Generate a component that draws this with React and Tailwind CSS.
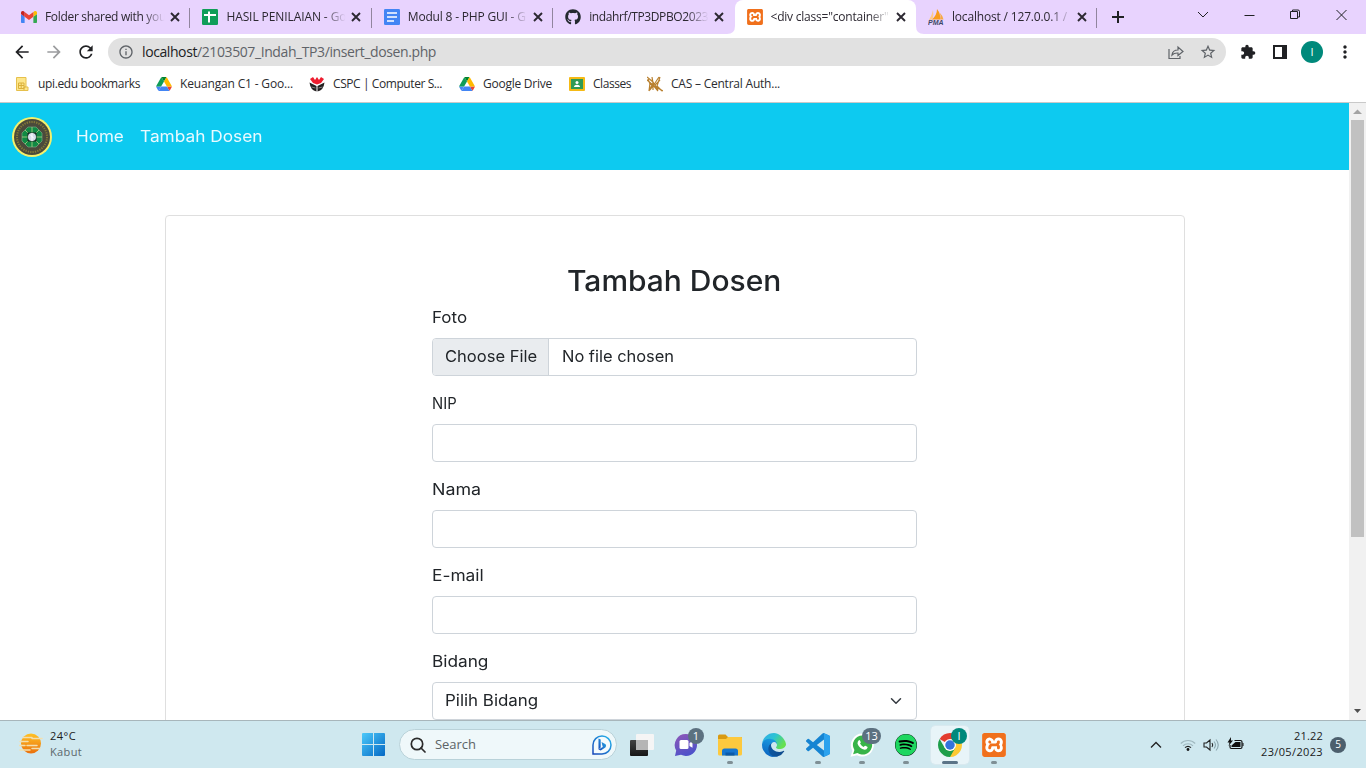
import React, { useLayoutEffect, useRef } from "react";
import {
  MdArrowBack, MdArrowForward, MdRefresh, MdInfoOutline, MdStarBorder, MdExtension,
  MdMoreVert,
} from "react-icons/md";
import { FaGithub, FaSpotify } from "react-icons/fa";
import { SiXampp } from "react-icons/si";

// A single line of text whose letter spacing is adjusted to fill the given width.
function Fit({ w, className = "", children }) {
  const ref = useRef(null);
  useLayoutEffect(() => {
    const el = ref.current;
    const adjust = () => {
      el.style.letterSpacing = "0px";
      const natural = el.getBoundingClientRect().width;
      el.style.letterSpacing = (w - natural) / el.textContent.length + "px";
    };
    adjust();
    document.fonts?.ready.then(adjust);
  }, [w]);
  return <span ref={ref} className={"inline-block shrink-0 whitespace-pre " + className}>{children}</span>;
}

// A single line of text whose glyphs are widened to fill the given width.
function Wide({ w, className = "", children }) {
  const ref = useRef(null);
  useLayoutEffect(() => {
    const el = ref.current;
    const adjust = () => { el.style.transform = `scaleX(${w / el.offsetWidth})`; };
    adjust();
    document.fonts?.ready.then(adjust);
  }, [w]);
  return (
    <span className={"inline-block shrink-0 whitespace-pre " + className} style={{ width: w }}>
      <span ref={ref} className="inline-block origin-left">{children}</span>
    </span>
  );
}

const Gmail = () => (
  <svg viewBox="52 42 88 66" className="h-3 w-4">
    <path fill="#4285f4" d="M58 108h14V74L52 59v43c0 3.32 2.69 6 6 6" />
    <path fill="#34a853" d="M120 108h14c3.32 0 6-2.69 6-6V59l-20 15" />
    <path fill="#fbbc04" d="M120 48v26l20-15v-8c0-7.42-8.47-11.65-14.4-7.2" />
    <path fill="#ea4335" d="M72 74V48l24 18 24-18v26L96 92" />
    <path fill="#c5221f" d="M52 51v8l20 15V48l-5.6-4.2c-5.94-4.45-14.4-.22-14.4 7.2" />
  </svg>
);
const Sheets = () => (
  <svg viewBox="0 0 16 16" className="size-4">
    <rect width="16" height="16" rx="1.3" fill="#0f9d58" />
    <path d="M2 6h12M7 2.5v11" stroke="#fff" strokeWidth="2" />
  </svg>
);
const Docs = () => (
  <svg viewBox="0 0 16 16" className="size-4">
    <rect width="16" height="16" rx="1.3" fill="#4285f4" />
    <path d="M3 4h10M3 8h10M3 12h7" stroke="#fff" strokeWidth="1.7" />
  </svg>
);
const Pma = () => (
  <svg viewBox="0 0 16 16" className="size-4">
    <path d="M5 1Q6 6 4.500 10.500L1 11Q4 6 5 1z" fill="#fdc98b" />
    <path d="M9 0Q13 5 12 10.500H4Q9 6 9 0z" fill="#f89c1c" />
    <path d="M12 4Q15 7 15.500 10.500H12Q13 7 12 4z" fill="#f7a944" />
    <text x="0" y="15.800" fontFamily="Liberation Sans" fontSize="6.500" fontWeight="700" fontStyle="italic" fill="#3d4666" textLength="15.500" lengthAdjust="spacingAndGlyphs">PMA</text>
  </svg>
);
const Drive = () => (
  <svg viewBox="0 0 87.3 78" className="h-3.5 w-4">
    <path fill="#4285f4" d="m6.600 66.850 3.850 6.650c.8 1.400 1.950 2.500 3.300 3.300l13.750-23.800h-27.500c0 1.550.4 3.100 1.200 4.500z" />
    <path fill="#0f9d58" d="m43.650 25-13.750-23.800c-1.350.8-2.500 1.900-3.300 3.300l-25.400 44a9.060 9.060 0 0 0 -1.200 4.500h27.500z" />
    <path fill="#ea4335" d="m73.550 76.800c1.350-.8 2.500-1.900 3.300-3.300l1.600-2.750 7.650-13.250c.8-1.400 1.200-2.950 1.200-4.500h-27.500l5.850 11.500z" />
    <path fill="#00832d" d="m43.650 25 13.750-23.800c-1.350-.8-2.900-1.200-4.500-1.200h-18.500c-1.600 0-3.150.45-4.500 1.200z" />
    <path fill="#4285f4" d="m59.800 53h-32.300l-13.750 23.800c1.350.8 2.900 1.200 4.500 1.200h50.800c1.600 0 3.150-.45 4.500-1.200z" />
    <path fill="#ffba00" d="m73.400 26.500-12.700-22c-.8-1.400-1.950-2.500-3.300-3.300l-13.750 23.800 16.150 28h27.450c0-1.550-.4-3.100-1.200-4.500z" />
  </svg>
);
const Building = () => (
  <svg viewBox="0 0 13 14" className="h-3.5 w-[13px]">
    <path d="M.5.5h9.500v9.500h2v3.500H.5z" fill="#fde68a" stroke="#e6c04c" />
    <path d="M2.500 6h5.500v5.500h-5.500zM2.500 8.500h5.500M5.200 6v5.500M8 13v-3h2" fill="none" stroke="#dbb03a" />
  </svg>
);
const Cspc = () => (
  <svg viewBox="0 0 16 16" className="size-4">
    <path d="M1 3l3-2 2 3 2-3 2 3 2-3 3 2-3 4-4 1.500-4-1.500z" fill="#ed1c2e" />
    <path d="M.5 6.500l7 3.500v5.500Q1.500 14.500.5 6.500zM15.500 6.500l-7 3.500v5.500q6-1 7-9z" fill="#231f20" />
    <path d="M2.500 11l4 1M13.500 11l-4 1" stroke="#aaa" strokeWidth=".7" />
  </svg>
);
const Classroom = () => (
  <svg viewBox="0 0 16 14" className="h-3.5 w-4">
    <rect width="16" height="14" rx="1" fill="#f5ba15" />
    <rect x="2" y="2" width="12" height="10" fill="#2f9a56" />
    <circle cx="8" cy="5.500" r="1.500" fill="#fff" />
    <path d="M4.800 10q.5-2.300 3.200-2.300T11.200 10z" fill="#fff" />
  </svg>
);
const Cas = () => (
  <svg viewBox="0 0 16 16" className="size-4" fill="none" stroke="#b9802f" strokeWidth="1.200">
    <path d="M0 1l6 5 3 5 7 4M1 3l2 5 4 2M3 7l-1 8M5 1l1 6-4 8M12 1L8 7l-5 7M13 4l-5 5 3 5M0 4l6 5 5 6M4 4l4 5M6 6v8M13 1l-3 9 5 5" />
  </svg>
);
const Xampp = ({ className }) => (
  <span className={"flex items-center justify-center rounded-[3px] bg-white text-[#f0701c] " + className}>
    <SiXampp className="size-full" />
  </span>
);

const Windows = () => (
  <svg viewBox="0 0 23 23" className="size-[23px]">
    <defs><linearGradient id="win" x1="0" y1="0" x2="1" y2="1"><stop stopColor="#4cc9fa" /><stop offset="1" stopColor="#0468c4" /></linearGradient></defs>
    <path fill="url(#win)" d="M1 0h10v11H0V1q0-1 1-1zM12 0h10q1 0 1 1v10H12zM0 12h11v11H1q-1 0-1-1zM12 12h11v10q0 1-1 1H12z" />
  </svg>
);
const Bing = () => (
  <svg viewBox="0 0 22 22" className="size-[22px]">
    <defs>
      <linearGradient id="bingr" x1="0" y1="1" x2="1" y2="0"><stop stopColor="#1746b8" /><stop offset="1" stopColor="#28b8ee" /></linearGradient>
    </defs>
    <path d="M2 20V11a9 9 0 1 1 9 9z" fill="#f4fbfd" stroke="url(#bingr)" strokeWidth="1.500" />
    <path d="M7.500 4.500l2.200 1v8l-2.200 2zM10.500 8l3.700 1.900q1.300.8.8 2.300-.4 1.300-1.800 2.100L9.700 16.500l-2.200-1 4.300-2.400z" fill="url(#bingr)" />
  </svg>
);
const TaskView = () => (
  <svg viewBox="0 0 24 22" className="h-[22px] w-6">
    <defs><linearGradient id="tv" x1="0" y1="0" x2="0" y2="1"><stop stopColor="#424242" /><stop offset="1" stopColor="#161616" /></linearGradient></defs>
    <rect x="0" y="6" width="18" height="16" rx="1" fill="url(#tv)" />
    <rect x="6" y="0" width="18" height="16" rx="1" fill="#f5f5f5" />
    <path d="M6 6h12v10H6z" fill="#b5b5b5" />
  </svg>
);
const Chat = () => (
  <svg viewBox="0 0 24 24" className="size-6">
    <defs><linearGradient id="chat" x1="0" y1="0" x2=".4" y2="1"><stop stopColor="#9058b7" /><stop offset="1" stopColor="#4f52c9" /></linearGradient></defs>
    <path d="M12 1a11 11 0 1 1-5 20.800L1 23l1.200-5.500A11 11 0 0 1 12 1z" fill="url(#chat)" />
    <rect x="5.500" y="7" width="9" height="9" rx="1.500" fill="#fff" />
    <path d="M15.500 10l3-1.700v6.500l-3-1.700z" fill="#fff" />
  </svg>
);
const Folder = () => (
  <svg viewBox="0 0 24 22" className="h-[22px] w-6">
    <path d="M0 2Q0 .5 1.500.5h6L10 3H23q1 0 1 1v4H0z" fill="#d99a12" />
    <path d="M0 5h8l2-2h13q1 0 1 1v16q0 1.500-1.500 1.500h-21Q0 21.500 0 20z" fill="#fdc93e" />
    <path d="M4 21.500V17q0-2.500 2.500-2.500h11Q20 14.500 20 17v4.500z" fill="#1676cf" />
    <path d="M7.500 18.500h9v3h-9z" fill="#0b5aa9" />
  </svg>
);
const Edge = () => (
  <svg viewBox="4.600 4.900 256 256" className="size-6">
    <defs>
      <linearGradient id="edA" x1="0" y1="0" x2="1" y2="0"><stop stopColor="#0c59a4" /><stop offset="1" stopColor="#114a8b" /></linearGradient>
      <linearGradient id="edB" x1=".6" y1="0" x2=".3" y2="1"><stop stopColor="#1b9de2" /><stop offset="1" stopColor="#0a62c0" /></linearGradient>
      <linearGradient id="edC" x1="0" y1="0" x2="1" y2=".5"><stop stopColor="#35a9e8" /><stop offset=".5" stopColor="#2cc3d5" /><stop offset="1" stopColor="#66e04f" /></linearGradient>
    </defs>
    <path fill="url(#edA)" d="M235.680 195.460a93.730 93.730 0 0 1-10.540 4.710 101.870 101.870 0 0 1-35.900 6.460c-47.320 0-88.540-32.550-88.540-74.320A31.480 31.480 0 0 1 117.130 105c-42.800 1.800-53.800 46.400-53.800 72.530 0 73.880 68.090 81.370 82.760 81.370 7.910 0 19.840-2.300 27-4.560l1.310-.44A128.340 128.340 0 0 0 241 201.100a4 4 0 0 0-5.320-5.640z" />
    <path fill="url(#edB)" d="M110.340 246.340A79.200 79.200 0 0 1 87.600 225 80.720 80.720 0 0 1 117.130 105c3.120-1.470 8.450-4.130 15.540-4a32.350 32.350 0 0 1 25.690 13 31.880 31.880 0 0 1 6.360 18.660c0-.21 24.460-79.600-80-79.600-43.900 0-80 41.660-80 78.210a130.150 130.150 0 0 0 12.110 56 128 128 0 0 0 156.380 67.110 75.550 75.550 0 0 1-62.780-8z" />
    <path fill="url(#edC)" d="M156.940 153.780c-.81 1.050-3.300 2.500-3.300 5.660 0 2.610 1.700 5.120 4.720 7.230 14.380 10 41.490 8.680 41.560 8.680a59.560 59.560 0 0 0 30.270-8.350A61.380 61.380 0 0 0 260.620 133c.26-22.410-8-37.310-11.340-43.910C228.090 47.760 182.680 4.920 132.620 4.920a128 128 0 0 0-128 126.200c.48-36.540 36.800-66.050 80-66.050 3.500 0 23.460.34 42 10.070 16.340 8.580 24.900 18.940 30.850 29.210 6.180 10.670 7.280 24.150 7.280 29.520S162 147.100 156.940 153.780z" />
  </svg>
);
const Code = () => (
  <svg viewBox="0 0 24 24" className="size-6">
    <path fill="#1684d2" d="M23.150 2.587L18.210.21a1.494 1.494 0 0 0-1.705.29l-9.460 8.630-4.120-3.128a.999.999 0 0 0-1.276.057L.327 7.261A1 1 0 0 0 .326 8.740L3.899 12 .326 15.260a1 1 0 0 0 .001 1.479L1.650 17.940a.999.999 0 0 0 1.276.057l4.120-3.128 9.460 8.630a1.492 1.492 0 0 0 1.704.29l4.942-2.377A1.500 1.500 0 0 0 24 20.060V3.939a1.500 1.500 0 0 0-.85-1.352zm-5.146 14.861L10.826 12l7.178-5.448v10.896z" />
    <path fill="#2ba2ee" d="M18.004.2l5.146 2.387Q24 3 24 3.939V20.060q0 .9-.85 1.350L18.004 23.800z" />
  </svg>
);
const Chrome = () => (
  <svg viewBox="0 0 48 48" className="size-6">
    <path d="M24 24L3.220 12A24 24 0 0 1 44.780 12z" fill="#e33b2e" />
    <path d="M24 24L44.780 12A24 24 0 0 1 24 48L13.600 30z" fill="#fcc934" />
    <path d="M3.220 12L13.600 30 24 36 34.400 30 24 48A24 24 0 0 1 3.220 12z" fill="#1e9e4a" />
    <path d="M24 12h20.800L34.400 30z" fill="#fcc934" />
    <circle cx="24" cy="24" r="12" fill="#fff" />
    <circle cx="24" cy="24" r="9.500" fill="#3273dc" />
  </svg>
);
const Whatsapp = () => (
  <svg viewBox="0 0 24 24" className="size-6">
    <path d="M12.500.5A11.500 11.500 0 1 1 7 22.200L.5 23.700l1.900-6A11.500 11.500 0 0 1 12.500.5z" fill="#fff" />
    <path d="M12.500 2.500a9.500 9.500 0 1 1-5 17.500l-4.400 1.200 1.300-4.200A9.500 9.500 0 0 1 12.500 2.500z" fill="#38b449" />
    <path d="M8.800 7.200q.8-.6 1.200.2l.8 1.800q.1.400-.8 1.400 1.400 2.500 3.800 3.400 1-1.400 1.500-1.200l2 1q.5.300.2 1-.8 2-2.800 1.900-5.300-1-7.200-6-.1-2.200 1.300-3.500z" fill="#fff" />
  </svg>
);
const Weather = () => (
  <svg viewBox="0 0 24 22" className="h-[22px] w-6">
    <defs><linearGradient id="sun" x1="0" y1="0" x2="0" y2="1"><stop stopColor="#ffc225" /><stop offset="1" stopColor="#ea700d" /></linearGradient></defs>
    <circle cx="12" cy="10.500" r="10" fill="url(#sun)" />
    <path d="M4 4.500h9M13 5.500h10M1 8.500h8M8 12.500h10M0 12.500h6M13 15.500h8M1 17h10" stroke="#f3dfae" strokeWidth="1.500" strokeLinecap="round" />
  </svg>
);
const Crest = () => (
  <svg viewBox="0 0 40 40" className="size-10">
    <circle cx="20" cy="20" r="20" fill="#f4f06b" />
    <circle cx="20" cy="20" r="18" fill="#4b4a3b" />
    <circle cx="20" cy="20" r="15" fill="none" stroke="#857a38" strokeWidth="2" strokeDasharray="1.300 1.100" />
    <path d="M16 10h8l6 6v8L24 30h-8L10 24v-8z" fill="#108a43" stroke="#77a581" strokeWidth=".7" />
    <path d="M20 10v20M10 20h20M13 13l3 3M27 13l-3 3M13 27l3-3M27 27l-3-3" stroke="#b8cf8b" strokeWidth=".8" />
    <rect x="15.500" y="15.500" width="9" height="9" fill="#1a2824" />
    <circle cx="20" cy="20" r="4" fill="#d4dce8" />
    <path d="M20 16v8M18 17.500l4 4" stroke="#fff" strokeWidth=".9" />
  </svg>
);

const tabs = [
  { icon: <Gmail />, title: "Folder shared with you", w: 121 },
  { icon: <Sheets />, title: "HASIL PENILAIAN - Go", w: 120 },
  { icon: <Docs />, title: "Modul 8 - PHP GUI - G", w: 118 },
  { icon: <FaGithub className="size-4 text-[#24292f]" />, title: "indahrf/TP3DPBO2023", w: 119, last: true },
  { icon: <Xampp className="size-4" />, title: '<div class="container"', w: 118, active: true },
  { icon: <Pma />, title: "localhost / 127.0.0.1 / ", w: 118 },
];

function Tab({ icon, title, w, active, last }) {
  return (
    <div className={"relative flex h-[34px] w-[181.400px] shrink-0 items-center pl-3 " + (active ? "rounded-t-lg bg-white" : "")}>
      <span className="flex size-4 shrink-0 items-center justify-center">{icon}</span>
      <span className="ml-2 w-[122px] overflow-hidden text-[12px] leading-4 [mask-image:linear-gradient(to_right,black_80%,transparent_98%)]">
        <Fit w={w}>{title}</Fit>
      </span>
      <svg viewBox="0 0 10 10" className="ml-[3px] size-2.5 shrink-0" stroke="currentColor" strokeWidth="1.900"><path d="M1 1l8 8M9 1l-8 8" /></svg>
      {!active && !last && <span className="absolute right-0 top-2 h-5 w-px bg-[#91859e]" />}
      {active && (
        <>
          <svg viewBox="0 0 8 8" className="absolute -left-2 bottom-0 size-2"><path d="M8 0v8H0Q8 8 8 0z" fill="#fff" /></svg>
          <svg viewBox="0 0 8 8" className="absolute -right-2 bottom-0 size-2"><path d="M0 0v8h8Q0 8 0 0z" fill="#fff" /></svg>
        </>
      )}
    </div>
  );
}

function TitleBar() {
  return (
    <div className="flex h-[34px] bg-[#e8d3fe] pl-[9px] text-[#2c2831]">
      {tabs.map((t) => <Tab key={t.title} {...t} />)}
      <div className="flex flex-1 items-center">
        <svg viewBox="0 0 12 12" className="ml-[15px] size-3" stroke="#202124" strokeWidth="2"><path d="M6 0v12M0 6h12" /></svg>
        <svg viewBox="0 0 150 12" className="ml-[74px] mb-1.5 h-3 w-[150px]" fill="none" stroke="#202124" strokeWidth="1">
          <path d="M0 4l5 5 5-5M46.500 7.500h10M92.500 3.500h7v7h-7zM94.500 3.500v-1.500h5.500q1.500 0 1.500 1.500v5.500h-1.500M138.500 2l10 10M148.500 2l-10 10" />
        </svg>
      </div>
    </div>
  );
}

function Toolbar() {
  return (
    <div className="flex h-9 items-center bg-white pl-3 text-[#202124]">
      <MdArrowBack className="size-5" />
      <MdArrowForward className="ml-3 size-5 text-[#9b9c9e]" />
      <MdRefresh className="ml-3 size-5" />
      <div className="ml-3 flex h-7 w-[1118px] items-center rounded-full bg-[#e1e1e1] pl-2.5 pr-2.5 text-[#5f6368]">
        <MdInfoOutline className="size-4" />
        <span className="ml-2 flex text-[14px] leading-5">
          <Fit w={55} className="text-[#202124]">localhost</Fit>
          <Fit w={239}>/2103507_Indah_TP3/insert_dosen.php</Fit>
        </span>
        <svg viewBox="0 0 16 16" className="ml-auto size-4" fill="none" stroke="currentColor" strokeWidth="1.200">
          <path d="M1 5v9.500h11V12M4 11q.6-5 6-5V3l5 4.500L10 11.500V9q-4-.2-6 2z" />
        </svg>
        <MdStarBorder className="ml-4 size-4 scale-110" />
      </div>
      <MdExtension className="ml-3.5 size-4" />
      <svg viewBox="0 0 14 14" className="ml-[17px] size-3.5"><path fillRule="evenodd" d="M0 0h14v14H0zM2 2v10h7V2z" fill="#202124" /></svg>
      <span className="ml-3.5 flex size-[22px] items-center justify-center rounded-full bg-[#00897b] text-[11px] text-white">I</span>
      <MdMoreVert className="ml-3 size-5" />
    </div>
  );
}

const bookmarks = [
  { icon: <Building />, pad: "ml-4", gap: "ml-[9px]", w: 102, label: "upi.edu bookmarks" },
  { icon: <Drive />, pad: "ml-4", gap: "ml-2", w: 113, label: "Keuangan C1 - Goo..." },
  { icon: <Cspc />, pad: "ml-4", gap: "ml-2", w: 109, label: "CSPC | Computer S..." },
  { icon: <Drive />, pad: "ml-[17px]", gap: "ml-2", w: 69, label: "Google Drive" },
  { icon: <Classroom />, pad: "ml-[17px]", gap: "ml-2", w: 38, label: "Classes" },
  { icon: <Cas />, pad: "ml-4", gap: "ml-2", w: 109, label: "CAS – Central Auth..." },
];

function Bookmarks() {
  return (
    <div className="flex h-[33px] items-center border-b border-[#c9c9c9] bg-white pb-1 text-[12px] leading-4 text-[#2b2c2f]">
      {bookmarks.map((b) => (
        <div key={b.label} className={"flex items-center " + b.pad}>
          {b.icon}
          <Fit w={b.w} className={b.gap}>{b.label}</Fit>
        </div>
      ))}
    </div>
  );
}

const fields = [["NIP", 25], ["Nama", 49], ["E-mail", 52]];

function Label({ w, children }) {
  return <label className="mb-[9px] block h-6 leading-6"><Wide w={w}>{children}</Wide></label>;
}

function FormCard() {
  return (
    <div className="mx-auto mt-[45px] h-[640px] w-[1020px] rounded border border-[#dfdfdf] pt-12 text-base text-[#212529]">
      <div className="ml-[266px] w-[485px]">
        <h3 className="mb-[7px] flex h-[34px] items-center justify-center text-[28px] font-medium leading-none">
          <Wide w={214}>Tambah Dosen</Wide>
        </h3>
        <div className="mb-[15px]">
          <Label w={35}>Foto</Label>
          <div className="flex h-[38px] overflow-hidden rounded border border-[#ced4da] leading-[35px]">
            <span className="w-[116px] border-r border-[#ced4da] bg-[#e9ecef] pl-3"><Wide w={92}>Choose File</Wide></span>
            <span className="pl-[13px]"><Wide w={112}>No file chosen</Wide></span>
          </div>
        </div>
        {fields.map(([label, w]) => (
          <div key={label} className="mb-[15px]">
            <Label w={w}>{label}</Label>
            <input className="block h-[38px] w-full rounded border border-[#ced4da] bg-white" />
          </div>
        ))}
        <Label w={56}>Bidang</Label>
        <div className="flex h-[38px] items-center justify-between rounded border border-[#ced4da] pl-3 pr-3.5">
          <Wide w={93} className="mb-0.5">Pilih Bidang</Wide>
          <svg viewBox="0 0 16 16" className="size-3" fill="none" stroke="#343a40" strokeWidth="2" strokeLinecap="round" strokeLinejoin="round"><path d="M2 5l6 6 6-6" /></svg>
        </div>
      </div>
    </div>
  );
}

function Page() {
  return (
    <div className="flex h-[617px] overflow-hidden bg-white">
      <main className="w-[1349px] font-['Inter',sans-serif]">
        <nav className="flex h-[67px] items-center bg-[#0dcaf0] pl-3 text-base text-[#e9faff]">
          <Crest />
          <Wide w={48} className="mb-0.5 ml-6">Home</Wide>
          <Wide w={122} className="mb-0.5 ml-4">Tambah Dosen</Wide>
        </nav>
        <FormCard />
      </main>
      <div className="flex w-[17px] flex-col items-center bg-[#f1f1f1]">
        <svg viewBox="0 0 17 17" className="size-[17px]"><path d="M4 11h9L8.500 6.500z" fill="#a3a3a3" /></svg>
        <div className="h-[417px] w-[13px] bg-[#c1c1c1]" />
        <svg viewBox="0 0 17 17" className="mt-auto size-[17px]"><path d="M5 6h7L8.500 10z" fill="#505050" /></svg>
      </div>
    </div>
  );
}

const apps = [
  { icon: <TaskView /> },
  { icon: <Chat />, badge: "1" },
  { icon: <Folder />, run: true },
  { icon: <Edge /> },
  { icon: <Code />, run: true },
  { icon: <Whatsapp />, badge: "13", run: true },
  { icon: <span className="flex size-[22px] rounded-full bg-black"><FaSpotify className="size-[22px] text-[#1ed760]" /></span>, run: true },
  { icon: <Chrome />, badge: "I", active: true },
  { icon: <Xampp className="size-6" />, run: true },
];

function TaskApp({ icon, badge, run, active }) {
  return (
    <div className={"relative mx-[3px] flex h-[38px] w-[38px] shrink-0 items-center justify-center rounded " + (active ? "bg-[#e8f4f8] outline outline-[#d9e9ef]" : "")}>
      {icon}
      {badge && (
        <span className={"absolute flex items-center justify-center rounded-full text-[11px] leading-none text-white " +
          (active ? "right-[2px] top-[2px] size-4 bg-[#00897b] text-[9px]" : badge.length > 1 ? "right-0 top-[2px] h-4 w-[19px] bg-[#5c7180]" : "right-[1px] top-[2px] size-4 bg-[#5c7180]")}>{badge}</span>
      )}
      {(run || active) && <span className={"absolute bottom-0 h-[3px] rounded-full " + (active ? "w-4 bg-[#5b7487]" : "w-1.5 bg-[#7f8f95]")} />}
    </div>
  );
}

function Taskbar() {
  return (
    <div className="flex h-12 items-center border-t border-[#a8b6bb] bg-[#cfe8ef] text-[#1b1b1b]">
      <div className="ml-[19px] mb-[2px] flex w-[343px] items-center">
        <Weather />
        <div className="ml-[7px] flex flex-col text-[11px] leading-4">
          <Fit w={26} className="self-start">24°C</Fit>
          <Fit w={32} className="self-start text-[#5b676b]">Kabut</Fit>
        </div>
      </div>
      <Windows />
      <div className="ml-3.5 flex h-[31px] w-[218px] items-center rounded-full border border-[#b9d2d9] bg-[#eff8fa] pl-2.5 pr-[3px]">
        <svg viewBox="0 0 16 16" className="size-4" fill="none" stroke="#2b2b2b" strokeWidth="1.700" strokeLinecap="round"><circle cx="7" cy="7" r="5.700" /><path d="M11 11l4 4" /></svg>
        <Fit w={41} className="ml-[9px] text-[13px] text-[#5c6366]">Search</Fit>
        <span className="ml-auto"><Bing /></span>
      </div>
      <div className="ml-[3px] flex">
        {apps.map((a, i) => <TaskApp key={i} {...a} />)}
      </div>
      <svg viewBox="0 0 12 8" className="ml-[134px] h-2 w-3" fill="none" stroke="#222" strokeWidth="1.300"><path d="M1 6.500l5-5 5 5" /></svg>
      <svg viewBox="0 0 16 14" className="ml-[18px] h-3.5 w-4" fill="none">
        <path d="M.8 5.500a10 10 0 0 1 14.400 0M3 7.800a7 7 0 0 1 10 0" stroke="#a0b8bf" strokeWidth="1.100" />
        <path d="M5 9.600a4.500 4.500 0 0 1 6 0" stroke="#222" strokeWidth="1.200" /><circle cx="8" cy="11.500" r="1.400" fill="#111" />
      </svg>
      <svg viewBox="0 0 16 14" className="ml-[7px] h-3.5 w-4" fill="none" stroke="#222" strokeWidth="1.100">
        <path d="M1 5v4h2.500L7 12V2L3.500 5zM9 5q1.500 2 0 4" /><path d="M11 3.500q3 3.500 0 7M13 1.500q4.500 5.500 0 11" stroke="#8ca6ae" />
      </svg>
      <svg viewBox="0 0 16 14" className="ml-2 mb-0.5 h-3.5 w-[17px]" fill="none" stroke="#111">
        <path d="M7 3.500h6q1.500 0 1.500 1.500v5q0 1.500-1.500 1.500H4Q2.500 11.500 2.500 10V8" strokeWidth="1.200" />
        <path d="M4 10V8.500L8 5h5v5zM3.500 0L0 5.500h2L1 9l4.500-5.500h-2zM15 6h1v3h-1z" fill="#111" stroke="none" />
      </svg>
      <div className="ml-[17px] mb-px flex w-[62px] flex-col items-end text-[11px] leading-4">
        <Fit w={29}>21.22</Fit>
        <Fit w={62}>23/05/2023</Fit>
      </div>
      <span className="ml-[7px] flex size-4 items-center justify-center rounded-full bg-[#4c5f6d] text-[10px] text-white">5</span>
    </div>
  );
}

export default function App() {
  return (
    <div className="h-[768px] w-[1366px] overflow-hidden bg-white font-['Open_Sans',sans-serif]">
      <TitleBar />
      <Toolbar />
      <Bookmarks />
      <Page />
      <Taskbar />
    </div>
  );
}
